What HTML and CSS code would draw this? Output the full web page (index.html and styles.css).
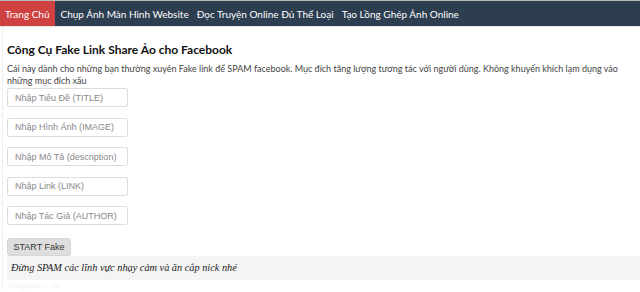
FILE: index.html
```html
<!DOCTYPE html>
<html lang="vi">
<head>
    <meta charset="UTF-8">
    <title>Công Cụ Fake Link Share Ảo cho Facebook</title>
    <link rel="stylesheet" href="styles.css">
</head>
<body>
    <nav class="topnav">
        <a href="#" class="active">Trang Chủ</a>
        <a href="#">Chụp Ảnh Màn Hình Website</a>
        <a href="#">Đọc Truyện Online Đủ Thể Loại</a>
        <a href="#">Tạo Lồng Ghép Ảnh Online</a>
    </nav>

    <div class="page">
        <h2 class="title">Công Cụ Fake Link Share Ảo cho Facebook</h2>
        <p class="intro">Cái này dành cho những bạn thường xuyên Fake link để SPAM facebook. Mục đích tăng lượng tương tác với người dùng. Không khuyến khích lạm dụng vào những mục đích xấu</p>

        <form class="fake-form">
            <input type="text" placeholder="Nhập Tiêu Đề (TITLE)">
            <input type="text" placeholder="Nhập Hình Ảnh (IMAGE)">
            <input type="text" placeholder="Nhập Mô Tả (description)">
            <input type="text" placeholder="Nhập Link (LINK)">
            <input type="text" placeholder="Nhập Tác Giả (AUTHOR)">
            <button type="button" class="btn">START Fake</button>
        </form>

        <div class="note">Đừng SPAM các lĩnh vực nhạy cảm và ăn cắp nick nhé</div>
        <div class="mark">congnghe.xx.net</div>
    </div>
</body>
</html>
```

FILE: styles.css
```css
body {
    margin: 0;
    background: #fff;
    font-family: Lato, "Noto Sans", sans-serif;
    color: #222;
}

/* NAV */
.topnav {
    display: flex;
    background: #2c3e50;
    border-top: 1px solid #bbb;
    border-bottom: 1px solid #e4e4e4;
    height: 25px;
    align-items: stretch;
}

.topnav a {
    display: flex;
    align-items: center;
    padding: 0 4px;
    color: #fff;
    font-size: 10px;
    text-decoration: none;
}

.topnav a.active {
    background: #d04242;
    padding: 0 5px;
    margin-right: 2px;
}

/* CONTENT */
.page {
    margin-left: 2px;
    border-left: 1px solid #eee;
    padding: 15px 0 0 4px;
}

.title {
    margin: 0 0 6px;
    font-size: 12px;
    font-weight: bold;
    color: #111;
}

.intro {
    margin: 0;
    font-size: 9px;
    line-height: 12px;
    color: #444;
    padding-right: 20px;
}

.fake-form {
    display: flex;
    flex-direction: column;
    align-items: flex-start;
    gap: 10.5px;
    margin-top: 1px;
}

.fake-form input {
    width: 121px;
    height: 19px;
    box-sizing: border-box;
    border: 1px solid #ddd;
    border-radius: 2px;
    padding: 0 7px;
    font-family: "Liberation Sans", Arial, sans-serif;
    font-size: 9px;
}

.fake-form input::placeholder {
    color: #888;
}

.btn {
    margin-top: 2px;
    width: 64px;
    height: 18px;
    border: 1px solid #d6d6d6;
    border-radius: 3px;
    background: #dedede;
    font-family: "Liberation Sans", Arial, sans-serif;
    font-size: 9px;
    color: #333;
    padding: 0;
}

.note {
    background: #f4f4f4;
    height: 24px;
    line-height: 24px;
    padding-left: 4px;
    font-family: "Liberation Serif", "Times New Roman", serif;
    font-style: italic;
    font-size: 10.3px;
    color: #222;
}

.mark {
    font-family: "Liberation Sans", Arial, sans-serif;
    font-size: 7px;
    line-height: 9px;
    color: #f3f3f3;
    padding: 1px 0 0 2px;
}
```
